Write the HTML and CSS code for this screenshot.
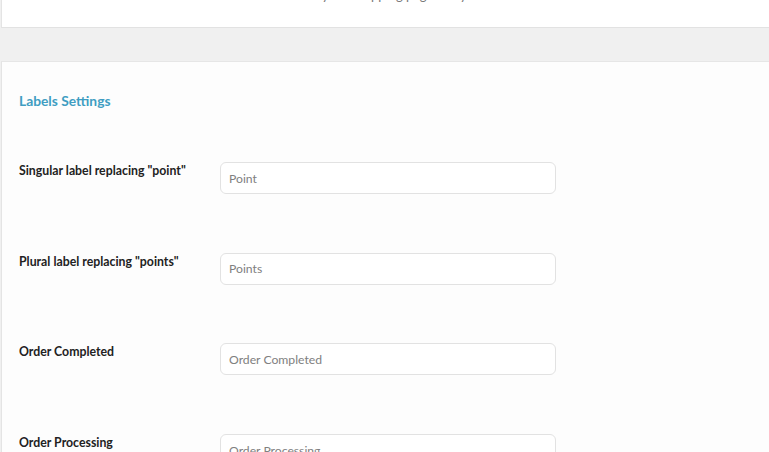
FILE: index.html
```html
<!DOCTYPE html>
<html>
<head>
<meta charset="utf-8">
<title>Labels Settings</title>
<link rel="stylesheet" href="styles.css">
</head>
<body>
    <!-- top card begin -->
    <div class="card card-top">
        <p class="note">Labels shown on your shopping pages only</p>
    </div>
    <!-- top card end -->
    <!-- labels begin -->
    <div class="card card-labels">
        <h2 class="title">Labels Settings</h2>
        <div class="row">
            <label class="label" for="f-point">Singular label replacing "point"</label>
            <input class="field" id="f-point" type="text" placeholder="Point">
        </div>
        <div class="row">
            <label class="label" for="f-points">Plural label replacing "points"</label>
            <input class="field" id="f-points" type="text" placeholder="Points">
        </div>
        <div class="row">
            <label class="label" for="f-completed">Order Completed</label>
            <input class="field" id="f-completed" type="text" placeholder="Order Completed">
        </div>
        <div class="row">
            <label class="label" for="f-processing">Order Processing</label>
            <input class="field" id="f-processing" type="text" placeholder="Order Processing">
        </div>
    </div>
    <!-- labels end -->
</body>
</html>
```
FILE: styles.css
```css
* { margin: 0; padding: 0; box-sizing: border-box; }
html, body { height: 100%; overflow: hidden; }
body { background: #f0f0f0; font-family: Lato, "Open Sans", "Liberation Sans", sans-serif; color: #222; }

.card { margin-left: 1px; background: #fff; border-left: 1px solid #e4e4e4; }

/* top card, scrolled mostly out of view */
.card-top { height: 28px; border-bottom: 1px solid #e2e2e2; overflow: hidden; }
.card-top .note { margin-top: -14px; padding-left: 222px; font-size: 13px; line-height: 18px; color: #777; white-space: nowrap; }

/* labels card */
.card-labels { margin-top: 33px; border-top: 1px solid #e6e6e6; background: #fdfdfd; padding: 29px 0 0 17px; min-height: 500px; }
.title { font-size: 13.8px; font-weight: 700; line-height: 20px; color: #3f9dc2; margin-bottom: 51px; }

.row { display: flex; align-items: flex-start; height: 32px; margin-bottom: 58.7px; }
.label { width: 201px; flex: none; font-size: 12.3px; font-weight: 700; line-height: 18px; color: #222; }
.field { width: 336px; height: 32px; padding: 0 8px; background: #fff; border: 1px solid #e2e2e2; border-radius: 6px; font-family: inherit; font-size: 12.2px; color: #333; outline: none; }
.field::placeholder { color: #808080; }
```
